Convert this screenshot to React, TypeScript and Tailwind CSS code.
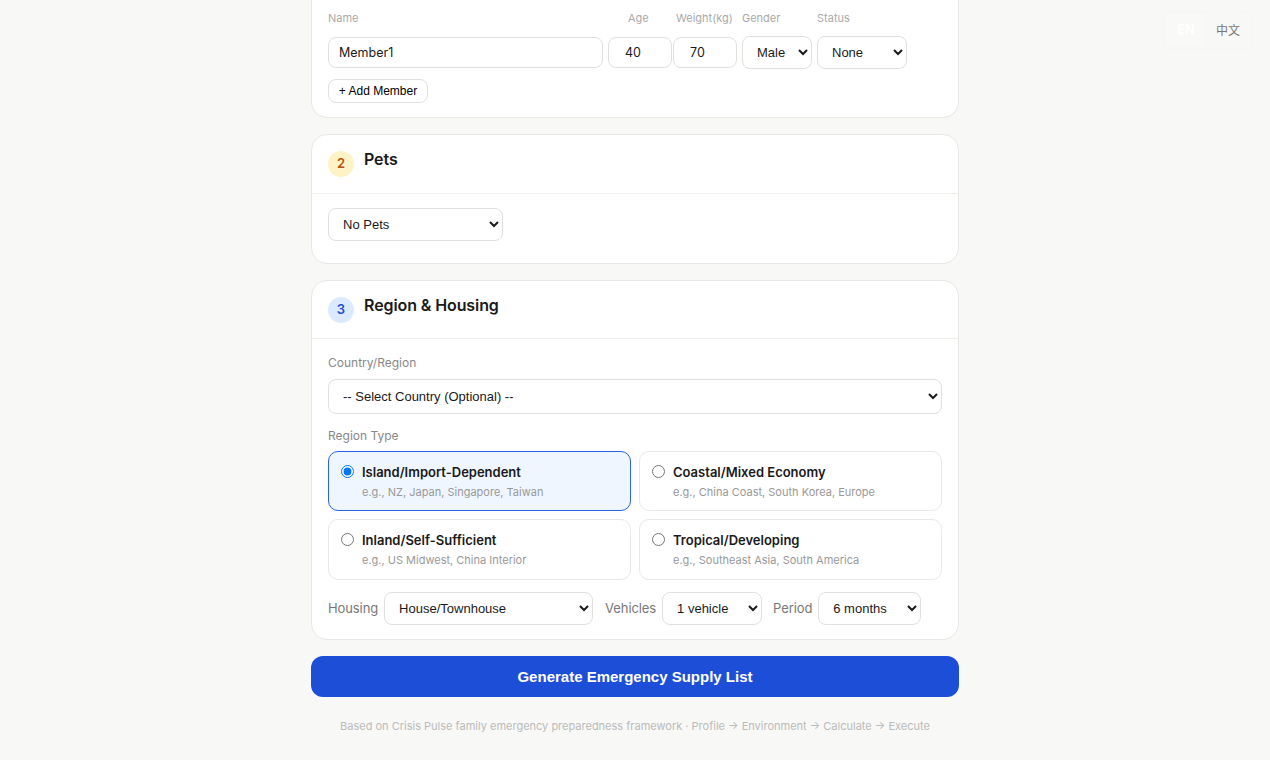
import { useState } from "react";

const regions = [
  { id: "island", title: "Island/Import-Dependent", hint: "e.g., NZ, Japan, Singapore, Taiwan" },
  { id: "coastal", title: "Coastal/Mixed Economy", hint: "e.g., China Coast, South Korea, Europe" },
  { id: "inland", title: "Inland/Self-Sufficient", hint: "e.g., US Midwest, China Interior" },
  { id: "tropical", title: "Tropical/Developing", hint: "e.g., Southeast Asia, South America" },
];

const sysFont = "font-['Liberation_Sans',Arial,sans-serif]";
const selectCls = `bg-white border border-[#e0e0dc] rounded-lg text-[13px] text-[#1a1a1a] ${sysFont}`;
const inputCls = "h-[31px] bg-white border border-[#e0e0dc] rounded-lg text-[12.5px] text-[#1a1a1a] pb-[1px] outline-none";

function SectionHeader({ n, title, badge, box, titleCls }: { n: number; title: string; badge: string; box: string; titleCls: string }) {
  return (
    <div className={`flex items-start gap-2.5 px-4 border-b border-[#efefec] ${box}`}>
      <span className={`flex w-[26px] h-[26px] items-center justify-center rounded-full text-[13px] font-semibold ${badge}`}>{n}</span>
      <h2 className={`text-base leading-[18px] font-semibold tracking-[-0.1px] text-[#1a1a1a] ${titleCls}`}>{title}</h2>
    </div>
  );
}

export default function App() {
  const [region, setRegion] = useState("island");

  return (
    <div className="relative h-[760px] overflow-hidden bg-[#f8f8f6] font-['Inter',sans-serif] antialiased">
      {/* Language toggle */}
      <div className="absolute top-[11px] right-[17px] flex rounded-lg border border-[#f6f6f3] p-[2px] text-xs">
        <button className="w-[40px] h-[32px] rounded-md bg-[#f9f9f7] text-[13px] font-semibold text-white">EN</button>
        <button className="w-[44px] h-[32px] rounded-md text-[#777] font-['Noto_Sans_CJK_SC',sans-serif]">中文</button>
      </div>

      <div className="mx-auto w-[648px]">
        {/* Household */}
        <section className="h-[118px] bg-white border border-t-0 border-[#e8e8e4] rounded-b-2xl px-4 pt-[11px]">
          <div className="flex h-[14px] text-[11px] leading-[14px] text-[#aaa]">
            <span className="w-[300px]">Name</span>
            <span className="w-[48px]">Age</span>
            <span className="w-[66px]">Weight(kg)</span>
            <span className="w-[75px]">Gender</span>
            <span>Status</span>
          </div>
          <div className="flex items-center gap-[5px] mt-[11px]">
            <input readOnly value="Member1" className={`${inputCls} w-[275px] px-2.5`} />
            <input readOnly value="40" className={`${inputCls} w-[64px] pl-4`} />
            <input readOnly value="70" className={`${inputCls} w-[64px] pl-4 -ml-1`} />
            <select className={`${selectCls} w-[70px] h-[33px] pl-[10px]`} defaultValue="Male">
              <option>Male</option>
              <option>Female</option>
            </select>
            <select className={`${selectCls} w-[90px] h-[33px] pl-[10px]`} defaultValue="None">
              <option>None</option>
            </select>
          </div>
          <button className={`mt-[10px] h-6 w-[100px] rounded-lg border border-[#e0e0dc] bg-white text-xs text-black ${sysFont}`}>+ Add Member</button>
        </section>

        {/* Pets */}
        <section className="mt-4 h-[130px] bg-white border border-[#e8e8e4] rounded-2xl">
          <SectionHeader n={2} title="Pets" badge="bg-[#fef3c7] text-[#b45309]" box="h-[59px] pt-[16px]" titleCls="-mt-[1px]" />
          <div className="px-4 pt-[14px]">
            <select className={`${selectCls} w-[175px] h-[33px] pl-[10px]`} defaultValue="No Pets">
              <option>No Pets</option>
            </select>
          </div>
        </section>

        {/* Region & Housing */}
        <section className="mt-4 h-[360px] bg-white border border-[#e8e8e4] rounded-2xl">
          <SectionHeader n={3} title="Region & Housing" badge="bg-[#dbeafe] text-[#1d4ed8]" box="h-[58px] pt-4" titleCls="-mt-[1px]" />
          <div className="px-4 pt-4">
            <label className="block text-xs leading-4 text-[#888]">Country/Region</label>
            <select className={`${selectCls} mt-2 w-full h-[35px] pl-[10px]`} defaultValue="">
              <option value="">-- Select Country (Optional) --</option>
            </select>
            <label className="block mt-[14px] text-xs leading-4 text-[#888]">Region Type</label>
            <div className="grid grid-cols-2 grid-rows-[60px_61px] gap-2 mt-[7px]">
              {regions.map((r) => (
                <label
                  key={r.id}
                  className={`flex items-start gap-2 rounded-[10px] border px-3 pt-[12px] ${
                    region === r.id ? "border-[#2563eb] bg-[#eff6ff]" : "border-[#e8e8e4] bg-white"
                  }`}
                >
                  <input
                    type="radio"
                    name="region"
                    checked={region === r.id}
                    onChange={() => setRegion(r.id)}
                    className="w-[13px] h-[13px] mt-[1px] shrink-0"
                  />
                  <span>
                    <span className="block text-[13px] leading-[17px] font-semibold text-[#1a1a1a]">{r.title}</span>
                    <span className="block mt-[4px] text-[11px] leading-[14px] text-[#999]">{r.hint}</span>
                  </span>
                </label>
              ))}
            </div>
            <div className="flex items-center mt-3 text-[13px] tracking-[-0.1px] text-[#777]">
              <span>Housing</span>
              <select className={`${selectCls} ml-[6px] w-[209px] h-[33px] pl-[10px] tracking-normal`} defaultValue="House/Townhouse">
                <option>House/Townhouse</option>
              </select>
              <span className="ml-3">Vehicles</span>
              <select className={`${selectCls} ml-[6px] w-[100px] h-[33px] pl-[10px] tracking-normal`} defaultValue="1 vehicle">
                <option>1 vehicle</option>
              </select>
              <span className="ml-[11px]">Period</span>
              <select className={`${selectCls} ml-[6px] w-[103px] h-[33px] pl-[10px] tracking-normal`} defaultValue="6 months">
                <option>6 months</option>
              </select>
            </div>
          </div>
        </section>

        <button className={`mt-4 w-full h-[41px] pt-[1px] rounded-xl bg-[#1d4ed8] text-[15px] font-bold text-white ${sysFont}`}>
          Generate Emergency Supply List
        </button>

        <p className="mt-[22px] text-center text-[11px] leading-[14px] text-[#bbb]">
          Based on Crisis Pulse family emergency preparedness framework · Profile → Environment → Calculate → Execute
        </p>
      </div>
    </div>
  );
}
